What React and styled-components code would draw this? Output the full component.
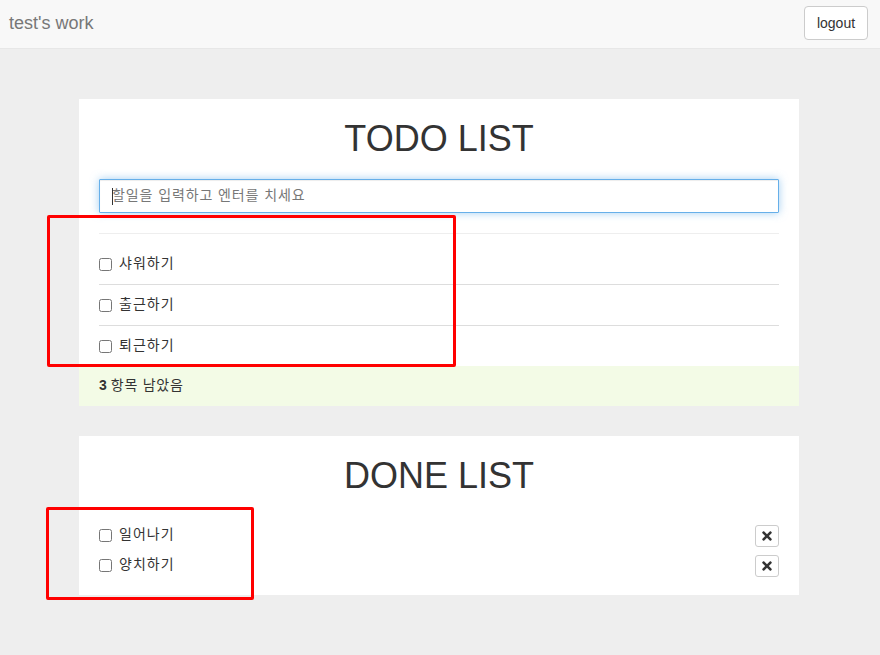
import React from 'react';
import styled, { createGlobalStyle } from 'styled-components';
import { FaTimes } from 'react-icons/fa';

const GlobalStyle = createGlobalStyle`
	* {
		box-sizing: border-box;
	}
	body {
		margin: 0;
		background-color: #eeeeee;
		color: #333333;
		font-family: 'Liberation Sans', 'Noto Sans CJK KR', sans-serif;
		font-size: 14px;
		line-height: 20px;
	}
`;

const todos = ['샤워하기', '출근하기', '퇴근하기'];
const dones = ['일어나기', '양치하기'];

const App = () => {
	return (
		<Page>
			<GlobalStyle />
			<Navbar>
				<Brand>test's work</Brand>
				<LogoutButton type='button'>logout</LogoutButton>
			</Navbar>
			<Main>
				<Card>
					<CardBody>
						<Title>TODO LIST</Title>
						<InputWrap>
							<TodoInput placeholder='할일을 입력하고 엔터를 치세요' readOnly />
							<Caret />
						</InputWrap>
						<Divider />
						<TodoList>
							{todos.map((todo) => (
								<TodoRow key={todo}>
									<Checkbox type='checkbox' readOnly />
									<RowLabel>{todo}</RowLabel>
								</TodoRow>
							))}
						</TodoList>
					</CardBody>
					<Footer>
						<strong>3</strong>
						<FooterText>항목 남았음</FooterText>
					</Footer>
				</Card>
				<Card>
					<DoneBody>
						<Title>DONE LIST</Title>
						<DoneList>
							{dones.map((done) => (
								<DoneRow key={done}>
									<Checkbox type='checkbox' readOnly />
									<RowLabel>{done}</RowLabel>
									<RemoveButton type='button' aria-label='remove'>
										<FaTimes size={14} />
									</RemoveButton>
								</DoneRow>
							))}
						</DoneList>
					</DoneBody>
				</Card>
			</Main>
			<Highlight $left={47} $top={215} $width={409} $height={152} />
			<Highlight $left={46} $top={507} $width={208} $height={93} />
		</Page>
	);
};

export default App;

const Page = styled.div`
	position: relative;
	min-height: 655px;
`;

const Navbar = styled.nav`
	height: 49px;
	padding: 6px 12px 0 9px;
	display: flex;
	justify-content: space-between;
	align-items: flex-start;
	background-color: #f8f8f8;
	border-bottom: 1px solid #e7e7e7;
`;

const Brand = styled.span`
	font-size: 18px;
	line-height: 34px;
	color: #777777;
`;

const LogoutButton = styled.button`
	width: 64px;
	height: 34px;
	padding: 0;
	font: inherit;
	color: #333333;
	background-color: #ffffff;
	border: 1px solid #cccccc;
	border-radius: 4px;
`;

const Main = styled.main`
	width: 720px;
	margin-left: 79px;
	padding-top: 50px;
	display: flex;
	flex-direction: column;
	gap: 30px;
`;

const Card = styled.section`
	background-color: #ffffff;
`;

const CardBody = styled.div`
	padding: 20px 20px 0;
`;

const DoneBody = styled.div`
	padding: 20px 20px 17px;
`;

const Title = styled.h1`
	margin: 0 0 20px;
	font-size: 36px;
	font-weight: 500;
	line-height: 40px;
	text-align: center;
	color: #333333;
`;

const InputWrap = styled.div`
	position: relative;
`;

const TodoInput = styled.input`
	display: block;
	width: 100%;
	height: 34px;
	padding: 5px 12px 7px;
	font: inherit;
	letter-spacing: 0.9px;
	color: #555555;
	background-color: #ffffff;
	border: 1px solid #66afe9;
	border-radius: 1px;
	outline: 0;
	box-shadow: inset 0 1px 1px rgba(0, 0, 0, 0.075), 0 0 8px rgba(102, 175, 233, 0.6);
	&::placeholder {
		color: #777777;
		opacity: 1;
	}
`;

const Caret = styled.span`
	position: absolute;
	left: 13px;
	top: 9px;
	width: 1px;
	height: 17px;
	background-color: #333333;
`;

const Divider = styled.hr`
	margin: 20px 0 10px;
	border: 0;
	border-top: 1px solid #eeeeee;
`;

const TodoList = styled.ul`
	margin: 0;
	padding: 0;
	list-style: none;
`;

const TodoRow = styled.li`
	height: 41px;
	display: flex;
	align-items: center;
	border-top: 1px solid #dddddd;
	&:first-child {
		height: 40px;
		border-top: 0;
	}
`;

const DoneList = styled.ul`
	margin: 28px 0 0;
	padding: 0;
	list-style: none;
	display: flex;
	flex-direction: column;
	gap: 6px;
`;

const DoneRow = styled.li`
	height: 24px;
	padding-bottom: 2px;
	display: flex;
	align-items: center;
`;

const Checkbox = styled.input`
	width: 13px;
	height: 13px;
	margin: 1px 7px 0 0;
	flex-shrink: 0;
`;

const RowLabel = styled.span`
	flex: 1;
	margin-bottom: 2px;
	letter-spacing: 1px;
`;

const RemoveButton = styled.button`
	width: 24px;
	height: 22px;
	margin-bottom: -2px;
	padding: 0;
	display: flex;
	align-items: center;
	justify-content: center;
	color: #333333;
	background-color: #ffffff;
	border: 1px solid #cccccc;
	border-radius: 3px;
`;

const Footer = styled.div`
	height: 40px;
	padding: 0 20px 2px;
	display: flex;
	align-items: center;
	gap: 4px;
	background-color: #f3fbe6;
	strong {
		font-weight: 700;
	}
`;

const FooterText = styled.span`
	letter-spacing: 0.75px;
`;

const Highlight = styled.div`
	position: absolute;
	left: ${(props) => props.$left}px;
	top: ${(props) => props.$top}px;
	width: ${(props) => props.$width}px;
	height: ${(props) => props.$height}px;
	border: 3px solid #ff0000;
	border-radius: 2px;
	pointer-events: none;
`;
